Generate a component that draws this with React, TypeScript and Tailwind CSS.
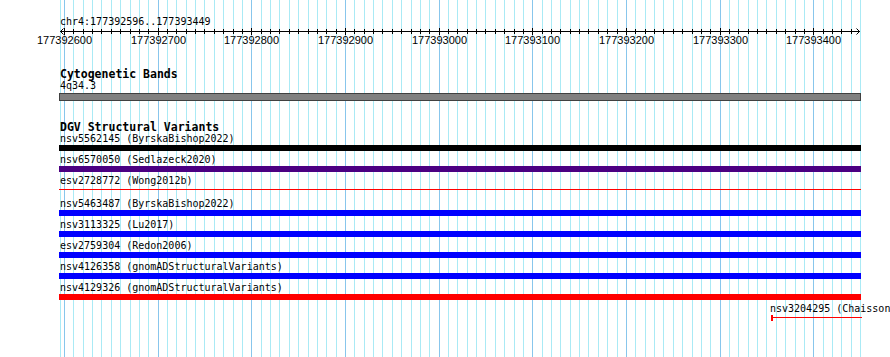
import React from 'react';

// genome coordinate -> pixel x on the 890px canvas
const x = (bp: number) => 64 + (bp - 177392600) * 0.9366;

const features = [
  { name: 'nsv5562145 (ByrskaBishop2022)', color: 'bg-black' },
  { name: 'nsv6570050 (Sedlazeck2020)', color: 'bg-[#4b0082]' },
  { name: 'esv2728772 (Wong2012b)', color: 'bg-[#ff0000]', thin: true },
  { name: 'nsv5463487 (ByrskaBishop2022)', color: 'bg-[#0000ff]' },
  { name: 'nsv3113325 (Lu2017)', color: 'bg-[#0000ff]' },
  { name: 'esv2759304 (Redon2006)', color: 'bg-[#0000ff]' },
  { name: 'nsv4126358 (gnomADStructuralVariants)', color: 'bg-[#0000ff]' },
  { name: 'nsv4129326 (gnomADStructuralVariants)', color: 'bg-[#ff0000]' },
];

const minorTicks = Array.from({ length: 85 }, (_, i) => 177392600 + i * 10);
const majorTicks = Array.from({ length: 9 }, (_, i) => 177392600 + i * 100);

function GridLines() {
  return (
    <svg className="absolute inset-0" width={890} height={357}>
      <line x1={60.5} y1={0} x2={60.5} y2={357} stroke="#aaeaf5" />
      <line x1={860.5} y1={0} x2={860.5} y2={357} stroke="#aaeaf5" />
      {minorTicks.map((bp) => {
        const px = Math.round(x(bp)) + 0.5;
        const major = bp % 100 === 0;
        return <line key={bp} x1={px} y1={0} x2={px} y2={357} stroke={major ? '#88c6ec' : '#aaeaf5'} />;
      })}
    </svg>
  );
}

function Ruler() {
  return (
    <svg width={890} height={20} className="block">
      <line x1={60} y1={3.5} x2={860} y2={3.5} stroke="#000" />
      <polyline points="63.5,0.5 60.5,3.5 63.5,6.5" fill="none" stroke="#000" />
      <polyline points="856.5,0.5 859.5,3.5 856.5,6.5" fill="none" stroke="#000" />
      {minorTicks.map((bp) => {
        const px = Math.round(x(bp)) + 0.5;
        const major = bp % 100 === 0;
        return <line key={bp} x1={px} y1={major ? 0 : 1} x2={px} y2={major ? 7 : 6} stroke="#000" />;
      })}
      {majorTicks.map((bp) => (
        <text
          key={bp}
          x={Math.round(x(bp)) + 0.5}
          y={16}
          textAnchor="middle"
          fontSize={11}
          fontFamily="'Liberation Sans', Arial, sans-serif"
          fill="#000"
        >
          {bp}
        </text>
      ))}
    </svg>
  );
}

export default function App() {
  return (
    <div className="relative w-[890px] h-[357px] bg-white overflow-hidden font-['DejaVu_Sans_Mono',monospace] text-black">
      <GridLines />
      <div className="relative">
        {/* Ruler */}
        <div className="pt-[16px] pl-[60px] text-[10px] leading-[12px] whitespace-nowrap">chr4:177392596..177393449</div>
        <Ruler />

        {/* Cytogenetic Bands */}
        <div className="mt-[20px] pl-[60px]">
          <div className="text-[11.5px] leading-[12px] font-bold whitespace-nowrap">Cytogenetic Bands</div>
          <div className="text-[10px] leading-[12px] whitespace-nowrap">4q34.3</div>
          <div className="mt-[1px] ml-[-1px] w-[802px] h-[8px] bg-[#808080] border border-[#404040]" />
        </div>

        {/* DGV Structural Variants */}
        <div className="mt-[20px] pl-[60px]">
          <div className="text-[11.5px] leading-[12px] font-bold whitespace-nowrap">DGV Structural Variants</div>
          {features.map((f) => (
            <div key={f.name}>
              <div className="text-[10px] leading-[12px] whitespace-nowrap">{f.name}</div>
              {f.thin ? (
                <div className="ml-[-1px] w-[802px] h-[6px] mb-[3px]">
                  <div className={`mt-[2px] h-[1px] ${f.color}`} />
                </div>
              ) : (
                <div className={`ml-[-1px] w-[802px] h-[6px] mb-[3px] ${f.color}`} />
              )}
            </div>
          ))}
          <div className="ml-[710px]">
            <div className="text-[10px] leading-[12px] whitespace-nowrap">nsv3204295 (Chaisson</div>
            <div className="flex items-start h-[6px]">
              <div className="ml-[1px] w-[2px] h-[6px] bg-[#ff0000]" />
              <div className="mt-[2px] w-[89px] h-[1px] bg-[#ff0000]" />
            </div>
          </div>
        </div>
      </div>
    </div>
  );
}
